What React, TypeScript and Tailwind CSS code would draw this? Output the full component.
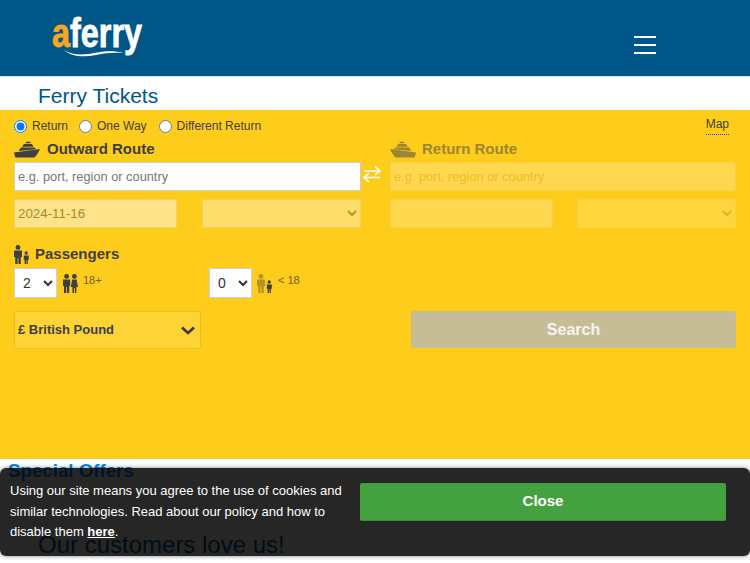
import React from "react";

function ShipIcon({ className }: { className: string }) {
  return (
    <svg viewBox="0 0 26 17" className={className} fill="currentColor">
      <path d="M0 11.5 L26 8 C24.5 11.5 22.5 14.5 20.5 16.5 L1.5 16.5 C0.8 15 0.3 13.5 0 11.5 Z" />
      <path d="M4.5 10 L7 6.5 L20.5 6.5 L22 8.2 Z" />
      <path d="M8 5.7 L10 3 L18 3 L19.5 5.7 Z" />
      <path d="M11 2.2 L13 0.6 L17 1 L16 2.2 Z" />
    </svg>
  );
}

function AdultChild({ className, faded }: { className: string; faded?: boolean }) {
  return (
    <svg viewBox="0 0 15 19" className={className} fill="currentColor">
      <g opacity={faded ? 0.4 : 1}>
        <circle cx="4" cy="2.4" r="2.4" />
        <path d="M0 5.4 H8 V12 H6.8 V19 H4.4 V13 H3.6 V19 H1.2 V12 H0 Z" />
      </g>
      <circle cx="12.2" cy="8" r="1.7" />
      <path d="M9.8 10.4 H14.8 V14.8 H13.8 V19 H12.5 V15.5 H11.9 V19 H10.6 V14.8 H9.8 Z" />
    </svg>
  );
}

function Couple({ className }: { className: string }) {
  return (
    <svg viewBox="0 0 15 19" className={className} fill="currentColor">
      <circle cx="3.6" cy="2.4" r="2.4" />
      <path d="M0 5.4 H7.2 V12 H6.2 V19 H4 V13 H3.2 V19 H1 V12 H0 Z" />
      <circle cx="11.4" cy="2.4" r="2.4" />
      <path d="M9.2 5.4 H13.6 L15 13 H13.4 V19 H11.8 V14 H11 V19 H9.4 V13 H7.8 Z" />
    </svg>
  );
}

function Radio({ label, checked }: { label: string; checked?: boolean }) {
  return (
    <label className="flex items-center gap-[5px]">
      <input type="radio" name="trip" defaultChecked={checked} className="m-0 h-[13px] w-[13px]" />
      <span>{label}</span>
    </label>
  );
}

export default function App() {
  return (
    <div className="relative h-[563px] w-[750px] overflow-hidden bg-white font-['Liberation_Sans',Arial,sans-serif]">
      {/* Header */}
      <header className="flex h-[77px] items-start justify-between border-b border-[#dfe6ea] bg-[#005787] pl-[52px] pr-[94px]">
        <div className="relative mt-[10px] h-[46px] w-[92px]">
          <div className="origin-left scale-x-[0.81] whitespace-nowrap text-[40px] font-bold leading-[46px] text-white [-webkit-text-stroke:0.8px]">
            <span className="text-[#f5a623]">a</span>ferry
          </div>
          <svg viewBox="0 0 62 8" className="absolute left-[11px] top-[39px] h-[8px] w-[62px]">
            <path d="M1 1 C10 7 22 6 34 3.5 C44 1.5 54 2 61 4 C50 3.5 42 4 33 6 C20 8.5 8 7.5 1 1 Z" fill="white" />
          </svg>
        </div>
        <button className="mt-[36px] flex w-[22px] flex-col gap-[6px]">
          <span className="h-[2px] bg-white" />
          <span className="h-[2px] bg-white" />
          <span className="h-[2px] bg-white" />
        </button>
      </header>

      <h1 className="h-[33px] pl-[38px] text-[21px] leading-[38px] text-[#005787]">Ferry Tickets</h1>

      {/* Search form */}
      <section className="relative h-[349px] bg-[#fecc1a] px-[14px] text-[#3f3f3f]">
        <div className="flex items-start justify-between pt-[9px] text-[12px] leading-[14px]">
          <div className="flex gap-[11px]">
            <Radio label="Return" checked />
            <Radio label="One Way" />
            <div className="ml-[1px]">
              <Radio label="Different Return" />
            </div>
          </div>
          <a className="-mt-[2px] mr-[7px] border-b border-dotted border-[#3f3f3f] pb-[3px]">Map</a>
        </div>

        <div className="mt-[2px] grid grid-cols-[347px_346px] gap-x-[29px]">
          <div className="flex flex-col">
            <h2 className="flex h-[24px] items-center gap-[7px] text-[15px] font-bold">
              <ShipIcon className="h-[17px] w-[26px]" />
              Outward Route
            </h2>
            <input
              placeholder="e.g. port, region or country"
              className="mt-[1px] h-[29px] border border-[#c9ced6] bg-white px-[3px] text-[12.8px] text-[#333] placeholder:text-[#777]"
            />
            <div className="mt-[8px] flex justify-between">
              <input
                defaultValue="2024-11-16"
                disabled
                className="h-[29px] w-[163px] border border-[#f0d270] bg-[#ffe38a] px-[3px] text-[13.33px] text-[#a58a30]"
              />
              <select disabled className="h-[29px] w-[159px] border border-[#f0d06a] bg-[#fedd69] text-[#b8962a]" />
            </div>
          </div>
          <div className="flex flex-col">
            <h2 className="flex h-[24px] items-center gap-[6px] text-[15px] font-bold text-[#9d8631]">
              <ShipIcon className="h-[17px] w-[26px] -scale-x-100" />
              Return Route
            </h2>
            <input
              disabled
              placeholder="e.g. port, region or country"
              className="mt-[1px] h-[29px] border border-[#f9d04a] bg-[#ffd84f] px-[3px] text-[12.8px] placeholder:text-[#e8bf2a]"
            />
            <div className="mt-[8px] flex justify-between">
              <input disabled className="h-[29px] w-[163px] border border-[#f9d04a] bg-[#ffd84f]" />
              <select disabled className="h-[29px] w-[159px] border border-[#f9d04a] bg-[#fed63c] text-[#dcb32a]" />
            </div>
          </div>
        </div>

        {/* Swap arrows sit between the two columns */}
        <svg viewBox="0 0 20 18" className="absolute left-[362px] top-[55px] h-[18px] w-[20px] text-white" fill="none" stroke="currentColor" strokeWidth="1.6">
          <path d="M2 6 H18 M13 1.5 L18 6 L13 10" />
          <path d="M18 12.5 H2 M7 8 L2 12.5 L7 17" />
        </svg>

        <h2 className="mt-[16px] flex h-[20px] items-center gap-[6px] text-[15px] font-bold">
          <AdultChild className="h-[19px] w-[15px]" />
          Passengers
        </h2>

        <div className="mt-[4px] flex h-[30px]">
          <div className="flex w-[195px]">
            <select className="h-[30px] w-[43px] border border-[#ccd3dc] bg-white pl-[4px] text-[14px] text-[#333]">
              <option>2</option>
            </select>
            <Couple className="ml-[6px] mt-[6px] h-[19px] w-[15px]" />
            <span className="ml-[5px] mt-[5px] text-[11px] leading-[14px] text-[#6d6224]">18+</span>
          </div>
          <div className="flex">
            <select className="h-[30px] w-[43px] border border-[#ccd3dc] bg-white pl-[4px] text-[14px] text-[#333]">
              <option>0</option>
            </select>
            <AdultChild faded className="ml-[5px] mt-[6px] h-[19px] w-[15px]" />
            <span className="ml-[6px] mt-[5px] text-[11px] leading-[14px] text-[#6d6224]">&lt; 18</span>
          </div>
        </div>

        <div className="mt-[13px] flex items-start justify-between">
          <div className="flex h-[38px] w-[187px] items-center justify-between rounded-[3px] border border-[#eebf18] bg-[#fed335] pl-[3px] pr-[5px] text-[13px] font-bold">
            <span>£ British Pound</span>
            <svg viewBox="0 0 14 9" className="h-[9px] w-[14px]" fill="none" stroke="#3a3a3a" strokeWidth="2.6">
              <path d="M1 1.5 L7 7 L13 1.5" />
            </svg>
          </div>
          <button className="h-[37px] w-[325px] rounded-[3px] bg-[#c6bd97] text-[16px] font-bold text-[#f5f5f0]">Search</button>
        </div>
      </section>

      {/* Content under the cookie bar */}
      <h2 className="pl-[8px] pt-[3px] text-[18.72px] font-bold leading-[18px] text-[#0a84f0]">Special Offers</h2>
      <h2 className="pl-[38px] pt-[51px] text-[24px] leading-[28px] text-[#005787]">Our customers love us!</h2>

      {/* Cookie notice */}
      <div className="absolute bottom-[7px] left-0 right-0 flex h-[88px] items-start justify-between rounded-[6px] bg-black/85 pl-[10px] pr-[24px] shadow-[0_0_4px_rgba(0,0,0,0.5)]">
        <p className="mt-[13px] w-[340px] text-[13px] leading-[20.5px] text-white">
          Using our site means you agree to the use of cookies and similar technologies. Read about our policy and how to disable them{" "}
          <a className="font-bold underline">here</a>.
        </p>
        <button className="mt-[15px] h-[38px] w-[366px] rounded-[2px] border-b border-[#3a8a36] bg-[#43a23f] text-[15px] font-bold text-white">Close</button>
      </div>
    </div>
  );
}
